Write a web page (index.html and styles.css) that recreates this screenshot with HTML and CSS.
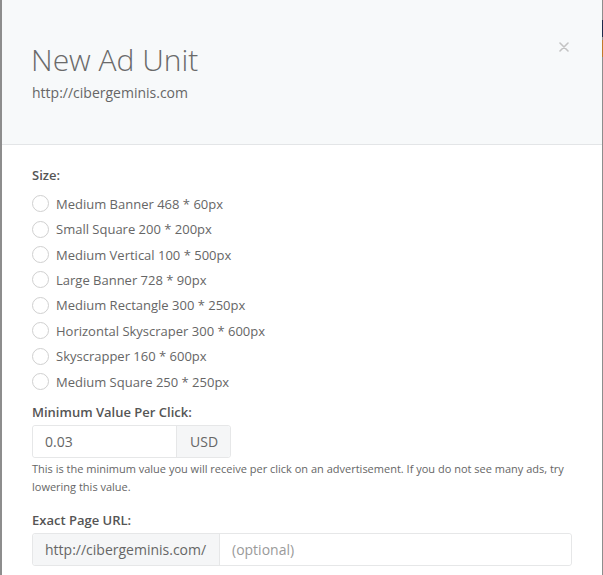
FILE: index.html
```html
<!DOCTYPE html>
<html>
<head>
<meta charset="utf-8">
<link rel="stylesheet" href="styles.css">
</head>
<body>
<div class="page">
  <div class="backdrop left"></div>
  <div class="modal">
    <div class="modal-header">
      <h1 class="title">New Ad Unit</h1>
      <div class="subtitle">http://cibergeminis.com</div>
      <button class="close" aria-label="Close">
        <svg width="10" height="10" viewBox="0 0 10 10"><path d="M1 1L9 9M9 1L1 9" stroke="#c3c3c3" stroke-width="1.6" stroke-linecap="round"/></svg>
      </button>
    </div>
    <div class="modal-body">
      <div class="label">Size:</div>
      <div class="radios">
        <label class="radio"><span class="circle"></span>Medium Banner 468 * 60px</label>
        <label class="radio"><span class="circle"></span>Small Square 200 * 200px</label>
        <label class="radio"><span class="circle"></span>Medium Vertical 100 * 500px</label>
        <label class="radio"><span class="circle"></span>Large Banner 728 * 90px</label>
        <label class="radio"><span class="circle"></span>Medium Rectangle 300 * 250px</label>
        <label class="radio"><span class="circle"></span>Horizontal Skyscraper 300 * 600px</label>
        <label class="radio"><span class="circle"></span>Skyscrapper 160 * 600px</label>
        <label class="radio"><span class="circle"></span>Medium Square 250 * 250px</label>
      </div>
      <div class="label label-mvpc">Minimum Value Per Click:</div>
      <div class="input-group small">
        <div class="input value">0.03</div>
        <div class="addon addon-right">USD</div>
      </div>
      <p class="help">This is the minimum value you will receive per click on an advertisement. If you do not see many ads, try lowering this value.</p>
      <div class="label label-url">Exact Page URL:</div>
      <div class="input-group wide">
        <div class="addon addon-left">http://cibergeminis.com/</div>
        <div class="input placeholder">(optional)</div>
      </div>
    </div>
  </div>
  <div class="backdrop right">
    <div class="chip navy"></div>
    <div class="chip orange"></div>
  </div>
</div>
</body>
</html>
```
FILE: styles.css
```css
html, body {
  margin: 0;
  padding: 0;
  height: 100%;
  background: #8a8a8a;
  font-family: "Open Sans", "Liberation Sans", sans-serif;
}
.page {
  display: flex;
  height: 575px;
  overflow: hidden;
}
.backdrop {
  width: 2px;
  flex: 0 0 2px;
  background: #8d8d8d;
}
.backdrop.right {
  display: flex;
  flex-direction: column;
}
.chip { width: 2px; }
.chip.navy { margin-top: 20px; height: 17px; background: #1e2a4a; }
.chip.orange { margin-top: 3px; height: 17px; background: #c07a2a; }
.modal {
  flex: 0 0 599px;
  background: #fff;
  display: flex;
  flex-direction: column;
}
.modal-header {
  position: relative;
  background: #f7f9fa;
  border-bottom: 1px solid #e3e5e7;
  height: 145px;
  box-sizing: border-box;
  padding: 40px 30px 0 29px;
}
.title {
  margin: 0;
  font-weight: 300;
  font-size: 30px;
  line-height: 40px;
  color: #6a6a6a;
}
.subtitle {
  font-size: 14px;
  line-height: 20px;
  color: #666;
  margin-top: 3px;
  padding-left: 1px;
}
.close {
  position: absolute;
  top: 42px;
  left: 557px;
  border: 0;
  background: none;
  padding: 0;
  width: 10px;
  height: 10px;
  line-height: 0;
}
.modal-body {
  padding: 20px 30px 0 30px;
}
.label {
  font-size: 13px;
  font-weight: 600;
  line-height: 20px;
  color: #555;
}
.radios {
  margin-top: 6px;
  display: flex;
  flex-direction: column;
}
.radio {
  display: flex;
  align-items: center;
  height: 25.43px;
  font-size: 13px;
  color: #666;
}
.circle {
  width: 15px;
  height: 15px;
  border: 1px solid #d0d0d0;
  border-radius: 50%;
  margin-right: 7px;
  box-sizing: content-box;
  background: #fff;
}
.label-mvpc { margin-top: 8px; }
.input-group {
  display: flex;
  margin-top: 3px;
  border: 1px solid #e6e7e8;
  border-radius: 3px;
  height: 33px;
  box-sizing: border-box;
  font-size: 14px;
  color: #666;
}
.input-group.small { width: 199px; }
.input-group.wide { width: 540px; }
.input, .addon {
  display: flex;
  align-items: center;
  padding: 0 12px;
}
.input { flex: 1; background: #fff; border-radius: 3px; }
.addon { background: #f5f6f7; }
.addon-right { border-left: 1px solid #e6e7e8; width: 54px; box-sizing: border-box; padding: 0 13px; border-radius: 0 3px 3px 0; }
.addon-left { border-right: 1px solid #e6e7e8; width: 187px; box-sizing: border-box; border-radius: 3px 0 0 3px; }
.placeholder { color: #9a9a9a; }
.help {
  margin: 2px 0 0 0;
  font-size: 11px;
  line-height: 18px;
  color: #666;
}
.label-url { margin-top: 14px; }
```
